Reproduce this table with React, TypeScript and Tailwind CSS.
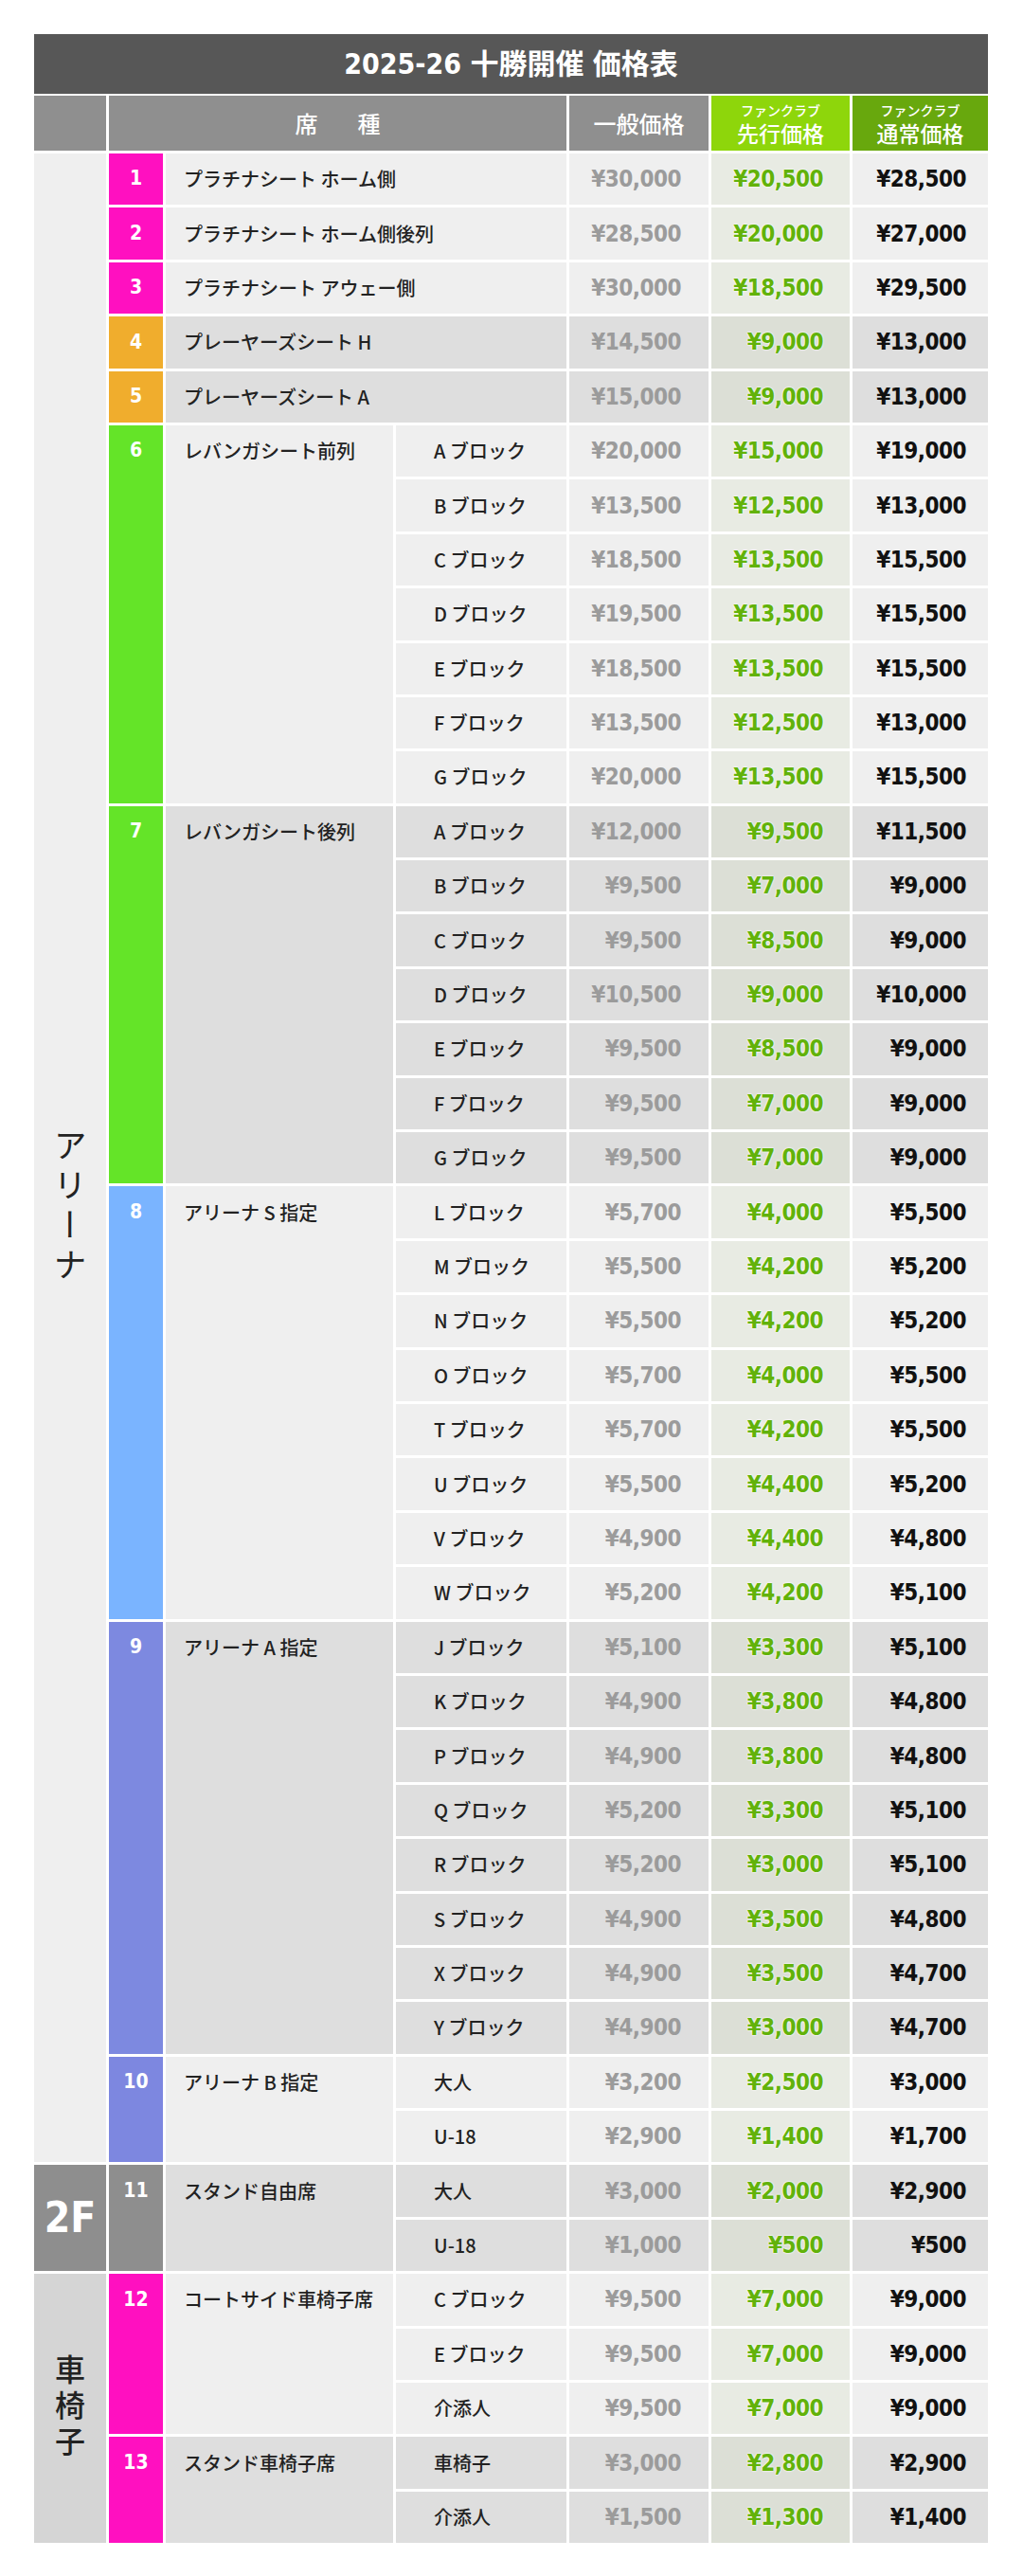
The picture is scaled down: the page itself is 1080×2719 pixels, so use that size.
const DISPLAY = "font-['Liberation_Sans_Narrow','DejaVu_Sans_Condensed','Noto_Sans_CJK_JP',sans-serif]";
const JP = "font-['Noto_Sans_CJK_JP',sans-serif]";

type Row = { sub?: string; gen: string; adv: string; reg: string };
type Group = { no: number; numBg: string; name: string; dark: boolean; rows: Row[] };

const ARENA: Group[] = [
  { no: 1, numBg: "bg-[#ff10c0]", name: "プラチナシート ホーム側", dark: false, rows: [{ gen: "¥30,000", adv: "¥20,500", reg: "¥28,500" }] },
  { no: 2, numBg: "bg-[#ff10c0]", name: "プラチナシート ホーム側後列", dark: false, rows: [{ gen: "¥28,500", adv: "¥20,000", reg: "¥27,000" }] },
  { no: 3, numBg: "bg-[#ff10c0]", name: "プラチナシート アウェー側", dark: false, rows: [{ gen: "¥30,000", adv: "¥18,500", reg: "¥29,500" }] },
  { no: 4, numBg: "bg-[#f0ad2d]", name: "プレーヤーズシート H", dark: true, rows: [{ gen: "¥14,500", adv: "¥9,000", reg: "¥13,000" }] },
  { no: 5, numBg: "bg-[#f0ad2d]", name: "プレーヤーズシート A", dark: true, rows: [{ gen: "¥15,000", adv: "¥9,000", reg: "¥13,000" }] },
  {
    no: 6, numBg: "bg-[#64e428]", name: "レバンガシート前列", dark: false,
    rows: [
      { sub: "A ブロック", gen: "¥20,000", adv: "¥15,000", reg: "¥19,000" },
      { sub: "B ブロック", gen: "¥13,500", adv: "¥12,500", reg: "¥13,000" },
      { sub: "C ブロック", gen: "¥18,500", adv: "¥13,500", reg: "¥15,500" },
      { sub: "D ブロック", gen: "¥19,500", adv: "¥13,500", reg: "¥15,500" },
      { sub: "E ブロック", gen: "¥18,500", adv: "¥13,500", reg: "¥15,500" },
      { sub: "F ブロック", gen: "¥13,500", adv: "¥12,500", reg: "¥13,000" },
      { sub: "G ブロック", gen: "¥20,000", adv: "¥13,500", reg: "¥15,500" },
    ],
  },
  {
    no: 7, numBg: "bg-[#64e428]", name: "レバンガシート後列", dark: true,
    rows: [
      { sub: "A ブロック", gen: "¥12,000", adv: "¥9,500", reg: "¥11,500" },
      { sub: "B ブロック", gen: "¥9,500", adv: "¥7,000", reg: "¥9,000" },
      { sub: "C ブロック", gen: "¥9,500", adv: "¥8,500", reg: "¥9,000" },
      { sub: "D ブロック", gen: "¥10,500", adv: "¥9,000", reg: "¥10,000" },
      { sub: "E ブロック", gen: "¥9,500", adv: "¥8,500", reg: "¥9,000" },
      { sub: "F ブロック", gen: "¥9,500", adv: "¥7,000", reg: "¥9,000" },
      { sub: "G ブロック", gen: "¥9,500", adv: "¥7,000", reg: "¥9,000" },
    ],
  },
  {
    no: 8, numBg: "bg-[#7ab4ff]", name: "アリーナ S 指定", dark: false,
    rows: [
      { sub: "L ブロック", gen: "¥5,700", adv: "¥4,000", reg: "¥5,500" },
      { sub: "M ブロック", gen: "¥5,500", adv: "¥4,200", reg: "¥5,200" },
      { sub: "N ブロック", gen: "¥5,500", adv: "¥4,200", reg: "¥5,200" },
      { sub: "O ブロック", gen: "¥5,700", adv: "¥4,000", reg: "¥5,500" },
      { sub: "T ブロック", gen: "¥5,700", adv: "¥4,200", reg: "¥5,500" },
      { sub: "U ブロック", gen: "¥5,500", adv: "¥4,400", reg: "¥5,200" },
      { sub: "V ブロック", gen: "¥4,900", adv: "¥4,400", reg: "¥4,800" },
      { sub: "W ブロック", gen: "¥5,200", adv: "¥4,200", reg: "¥5,100" },
    ],
  },
  {
    no: 9, numBg: "bg-[#7d89e0]", name: "アリーナ A 指定", dark: true,
    rows: [
      { sub: "J ブロック", gen: "¥5,100", adv: "¥3,300", reg: "¥5,100" },
      { sub: "K ブロック", gen: "¥4,900", adv: "¥3,800", reg: "¥4,800" },
      { sub: "P ブロック", gen: "¥4,900", adv: "¥3,800", reg: "¥4,800" },
      { sub: "Q ブロック", gen: "¥5,200", adv: "¥3,300", reg: "¥5,100" },
      { sub: "R ブロック", gen: "¥5,200", adv: "¥3,000", reg: "¥5,100" },
      { sub: "S ブロック", gen: "¥4,900", adv: "¥3,500", reg: "¥4,800" },
      { sub: "X ブロック", gen: "¥4,900", adv: "¥3,500", reg: "¥4,700" },
      { sub: "Y ブロック", gen: "¥4,900", adv: "¥3,000", reg: "¥4,700" },
    ],
  },
  {
    no: 10, numBg: "bg-[#7d87e0]", name: "アリーナ B 指定", dark: false,
    rows: [
      { sub: "大人", gen: "¥3,200", adv: "¥2,500", reg: "¥3,000" },
      { sub: "U-18", gen: "¥2,900", adv: "¥1,400", reg: "¥1,700" },
    ],
  },
];

const STAND: Group[] = [
  {
    no: 11, numBg: "bg-[#8e8e8e]", name: "スタンド自由席", dark: true,
    rows: [
      { sub: "大人", gen: "¥3,000", adv: "¥2,000", reg: "¥2,900" },
      { sub: "U-18", gen: "¥1,000", adv: "¥500", reg: "¥500" },
    ],
  },
];

const WHEEL: Group[] = [
  {
    no: 12, numBg: "bg-[#ff10c0]", name: "コートサイド車椅子席", dark: false,
    rows: [
      { sub: "C ブロック", gen: "¥9,500", adv: "¥7,000", reg: "¥9,000" },
      { sub: "E ブロック", gen: "¥9,500", adv: "¥7,000", reg: "¥9,000" },
      { sub: "介添人", gen: "¥9,500", adv: "¥7,000", reg: "¥9,000" },
    ],
  },
  {
    no: 13, numBg: "bg-[#ff10c0]", name: "スタンド車椅子席", dark: true,
    rows: [
      { sub: "車椅子", gen: "¥3,000", adv: "¥2,800", reg: "¥2,900" },
      { sub: "介添人", gen: "¥1,500", adv: "¥1,300", reg: "¥1,400" },
    ],
  },
];

function GroupBlock({ g }: { g: Group }) {
  const bg = g.dark ? "bg-[#dedede]" : "bg-[#efefef]";
  const advBg = g.dark ? "bg-[#dcdfd6]" : "bg-[#e8ebe3]";
  return (
    <div className="flex gap-[3px]">
      <div className={`w-[57px] shrink-0 ${g.numBg}`}>
        <div className={`h-[54.4px] flex items-center justify-center text-white text-[21px] font-bold ${DISPLAY}`}>{g.no}</div>
      </div>
      <div className={`${g.rows[0].sub ? "w-[240px]" : "w-[423px]"} shrink-0 ${bg}`}>
        <div className={`h-[54.4px] flex items-center pl-[19px] text-[20px] font-medium text-[#222] ${JP}`}>{g.name}</div>
      </div>
      <div className="flex flex-col gap-[3px]">
        {g.rows.map((r, i) => (
          <div key={i} className="flex gap-[3px] h-[54.4px]">
            {r.sub && (
              <div className={`w-[180px] flex items-center pl-[40px] text-[20px] font-medium text-[#222] ${JP} ${bg}`}>{r.sub}</div>
            )}
            <div className={`w-[147px] flex items-center justify-end pr-[29px] text-[24px] tracking-[-0.5px] font-bold text-[#9b9b9b] ${DISPLAY} ${bg}`}>{r.gen}</div>
            <div className={`w-[146px] flex items-center justify-end pr-[28px] text-[24px] tracking-[-0.5px] font-bold text-[#62b20a] [text-shadow:0_0_2px_#fff,0_0_2px_#fff] ${DISPLAY} ${advBg}`}>{r.adv}</div>
            <div className={`w-[143px] flex items-center justify-end pr-[23px] text-[24px] tracking-[-0.5px] font-bold text-[#111] ${DISPLAY} ${bg}`}>{r.reg}</div>
          </div>
        ))}
      </div>
    </div>
  );
}

export default function App() {
  return (
    <div className="w-[1080px] h-[2719px] bg-white pt-[36px] pl-[36px]">
      <div className="w-[1007px]">
        <div className={`h-[63px] bg-[#575757] flex items-center justify-center text-white text-[30px] font-bold ${DISPLAY}`}>
          <span>2025-26 十勝開催 価格表</span>
        </div>
        <div className="mt-[2px] flex gap-[3px] h-[58px] text-white">
          <div className="w-[76px] bg-[#8f8f8f]" />
          <div className={`w-[483px] bg-[#8f8f8f] flex items-center justify-center gap-[42px] text-[24px] font-medium ${JP}`}>
            <span>席</span>
            <span>種</span>
          </div>
          <div className={`w-[147px] bg-[#8f8f8f] flex items-center justify-center text-[24px] font-medium ${JP}`}>一般価格</div>
          <div className={`w-[146px] bg-[#8ed60b] flex flex-col items-center justify-center ${JP}`}>
            <span className="text-[14px] leading-[19px] font-medium">ファンクラブ</span>
            <span className="text-[23px] leading-[28px] font-medium">先行価格</span>
          </div>
          <div className={`w-[143px] bg-[#68a80d] flex flex-col items-center justify-center ${JP}`}>
            <span className="text-[14px] leading-[19px] font-medium">ファンクラブ</span>
            <span className="text-[23px] leading-[28px] font-medium">通常価格</span>
          </div>
        </div>
        <div className="mt-[3px] flex flex-col gap-[3px]">
          <div className="flex gap-[3px]">
            <div className={`w-[76px] shrink-0 bg-[#efefef] flex items-center justify-center pt-[106px] ${JP}`}>
              <span className="[writing-mode:vertical-rl] text-[35px] tracking-[7px] leading-none text-[#222]">アリーナ</span>
            </div>
            <div className="flex flex-col gap-[3px]">
              {ARENA.map((g) => (
                <GroupBlock key={g.no} g={g} />
              ))}
            </div>
          </div>
          <div className="flex gap-[3px]">
            <div className={`w-[76px] shrink-0 bg-[#8e8e8e] flex items-center justify-center text-white text-[44px] font-bold ${DISPLAY}`}>2F</div>
            <div className="flex flex-col gap-[3px]">
              {STAND.map((g) => (
                <GroupBlock key={g.no} g={g} />
              ))}
            </div>
          </div>
          <div className="flex gap-[3px]">
            <div className={`w-[76px] shrink-0 bg-[#d5d5d5] flex items-center justify-center ${JP}`}>
              <span className="[writing-mode:vertical-rl] text-[32px] font-medium tracking-[6px] leading-none text-[#222]">車椅子</span>
            </div>
            <div className="flex flex-col gap-[3px]">
              {WHEEL.map((g) => (
                <GroupBlock key={g.no} g={g} />
              ))}
            </div>
          </div>
        </div>
      </div>
    </div>
  );
}
